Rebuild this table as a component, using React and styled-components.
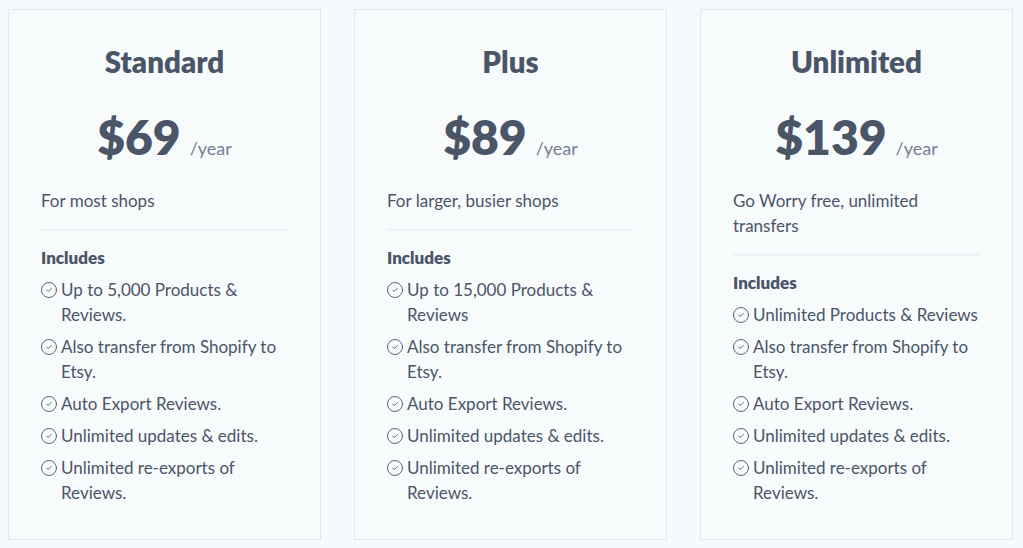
import styled, { createGlobalStyle } from 'styled-components';
import { CircleCheck } from 'lucide-react';

const Global = createGlobalStyle`
  body {
    margin: 0;
    background: #f7fafc;
    font-family: Lato, "Open Sans", sans-serif;
    color: #4a5568;
  }
`;

const Plans = styled.div`
  display: grid;
  grid-template-columns: repeat(3, 1fr);
  gap: 33px;
  padding: 9px 10px 8px 8px;
`;

const Card = styled.div`
  background: #f8fbfc;
  border: 1px solid #e2e8f0;
  padding: 30px 32px 30px;
  min-height: 531px;
  box-sizing: border-box;
`;

const Title = styled.h2`
  margin: 0;
  text-align: center;
  font-size: 29.5px;
  font-weight: 800;
  line-height: 44px;
  color: #4a5568;
`;

const Price = styled.div`
  display: flex;
  justify-content: center;
  align-items: baseline;
  gap: 9px;
  margin-top: 28px;
`;

const Amount = styled.span`
  font-size: 48px;
  font-weight: 800;
  line-height: 50px;
  color: #4a5568;
`;

const Period = styled.span`
  font-size: 18px;
  color: #718096;
`;

const Desc = styled.p`
  margin: 26px 0 0;
  font-size: 17px;
  line-height: 25px;
  padding-bottom: 16px;
  border-bottom: 2px solid #edf2f7;
`;

const Includes = styled.h4`
  margin: 14px 0 5px;
  font-size: 17px;
  font-weight: 800;
  line-height: 25px;
`;

const List = styled.ul`
  list-style: none;
  margin: 0;
  padding: 0;
`;

const Item = styled.li`
  display: flex;
  align-items: flex-start;
  gap: 3px;
  font-size: 17px;
  line-height: 25px;
  margin-top: 7px;

  svg {
    flex: none;
    margin-top: 4px;
    margin-left: -1px;
    color: #4a5568;
  }
`;

const plans = [
  {
    name: 'Standard',
    price: '$69',
    desc: 'For most shops',
    items: [
      'Up to 5,000 Products & Reviews.',
      'Also transfer from Shopify to Etsy.',
      'Auto Export Reviews.',
      'Unlimited updates & edits.',
      'Unlimited re-exports of Reviews.',
    ],
  },
  {
    name: 'Plus',
    price: '$89',
    desc: 'For larger, busier shops',
    items: [
      'Up to 15,000 Products & Reviews',
      'Also transfer from Shopify to Etsy.',
      'Auto Export Reviews.',
      'Unlimited updates & edits.',
      'Unlimited re-exports of Reviews.',
    ],
  },
  {
    name: 'Unlimited',
    price: '$139',
    desc: 'Go Worry free, unlimited transfers',
    items: [
      'Unlimited Products & Reviews',
      'Also transfer from Shopify to Etsy.',
      'Auto Export Reviews.',
      'Unlimited updates & edits.',
      'Unlimited re-exports of Reviews.',
    ],
  },
];

function App() {
  return (
    <>
      <Global />
      <Plans>
        {plans.map((p) => (
          <Card key={p.name}>
            <Title>{p.name}</Title>
            <Price>
              <Amount>{p.price}</Amount>
              <Period>/year</Period>
            </Price>
            <Desc>{p.desc}</Desc>
            <Includes>Includes</Includes>
            <List>
              {p.items.map((it) => (
                <Item key={it}>
                  <CircleCheck size={18} strokeWidth={1.2} />
                  <span>{it}</span>
                </Item>
              ))}
            </List>
          </Card>
        ))}
      </Plans>
    </>
  );
}

export default App;
